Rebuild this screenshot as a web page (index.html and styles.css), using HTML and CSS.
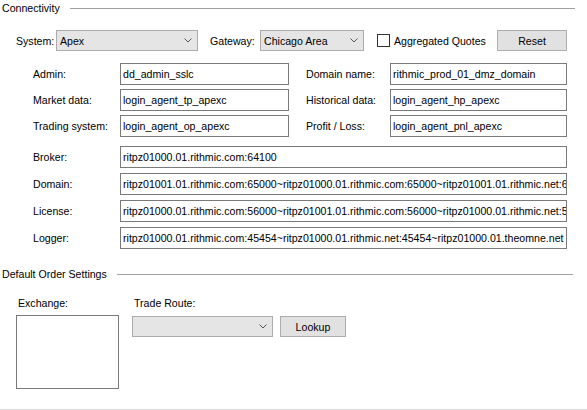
FILE: index.html
```html
<!DOCTYPE html>
<html lang="en">
<head>
  <meta charset="UTF-8" />
  <meta name="viewport" content="width=device-width, initial-scale=1.0"/>
  <title>Connection Settings</title>
  <link rel="stylesheet" href="styles.css">
</head>
<body>
  <div class="window">
    <!-- Connectivity group -->
    <div class="group-title">
      <span>Connectivity</span>
      <div class="rule"></div>
    </div>

    <div class="top-row">
      <span class="lbl lbl-system">System:</span>
      <div class="combo combo-system">
        <span>Apex</span>
        <svg width="8" height="5" viewBox="0 0 8 5"><path d="M0.5 0.5 L4 4 L7.5 0.5" fill="none" stroke="#555" stroke-width="1"/></svg>
      </div>
      <span class="lbl lbl-gateway">Gateway:</span>
      <div class="combo combo-gateway">
        <span>Chicago Area</span>
        <svg width="8" height="5" viewBox="0 0 8 5"><path d="M0.5 0.5 L4 4 L7.5 0.5" fill="none" stroke="#555" stroke-width="1"/></svg>
      </div>
      <label class="check">
        <span class="box"></span>
        <span>Aggregated Quotes</span>
      </label>
      <button class="btn btn-reset">Reset</button>
    </div>

    <div class="creds">
      <span class="lbl">Admin:</span>
      <div class="field">dd_admin_sslc</div>
      <span class="lbl">Domain name:</span>
      <div class="field">rithmic_prod_01_dmz_domain</div>

      <span class="lbl">Market data:</span>
      <div class="field">login_agent_tp_apexc</div>
      <span class="lbl">Historical data:</span>
      <div class="field">login_agent_hp_apexc</div>

      <span class="lbl">Trading system:</span>
      <div class="field">login_agent_op_apexc</div>
      <span class="lbl">Profit / Loss:</span>
      <div class="field">login_agent_pnl_apexc</div>
    </div>

    <div class="servers">
      <span class="lbl">Broker:</span>
      <div class="field">ritpz01000.01.rithmic.com:64100</div>
      <span class="lbl">Domain:</span>
      <div class="field">ritpz01001.01.rithmic.com:65000~ritpz01000.01.rithmic.com:65000~ritpz01001.01.rithmic.net:65000~ritpz01000.01.rithmic.net:65000</div>
      <span class="lbl">License:</span>
      <div class="field">ritpz01000.01.rithmic.com:56000~ritpz01001.01.rithmic.com:56000~ritpz01000.01.rithmic.net:56000~ritpz01001.01.rithmic.net:56000</div>
      <span class="lbl">Logger:</span>
      <div class="field">ritpz01000.01.rithmic.com:45454~ritpz01000.01.rithmic.net:45454~ritpz01000.01.theomne.net</div>
    </div>

    <!-- Default order settings group -->
    <div class="group-title group-orders">
      <span>Default Order Settings</span>
      <div class="rule"></div>
    </div>

    <div class="orders">
      <div class="exchange">
        <span class="lbl">Exchange:</span>
        <div class="listbox"></div>
      </div>
      <div class="route">
        <span class="lbl">Trade Route:</span>
        <div class="route-row">
          <div class="combo combo-route">
            <span></span>
            <svg width="8" height="5" viewBox="0 0 8 5"><path d="M0.5 0.5 L4 4 L7.5 0.5" fill="none" stroke="#555" stroke-width="1"/></svg>
          </div>
          <button class="btn btn-lookup">Lookup</button>
        </div>
      </div>
    </div>
  </div>
</body>
</html>
```

FILE: styles.css
```css
body {
  margin: 0;
  background: #fff;
  font-family: "Liberation Sans", Arial, sans-serif;
  font-size: 10.6px;
  color: #000;
}

.window {
  width: 587px;
  height: 410px;
  box-sizing: border-box;
  border-bottom: 1px solid #dadada;
  overflow: hidden;
}

.group-title {
  display: flex;
  align-items: center;
  height: 16px;
  padding: 0 12px 0 2px;
}

.group-title .rule {
  flex: 1;
  height: 1px;
  margin-left: 10px;
  background: #a0a0a0;
}

.group-orders {
  margin-top: 17px;
  padding-right: 14px;
}

.lbl {
  white-space: nowrap;
}

/* system / gateway row */
.top-row {
  display: flex;
  align-items: center;
  height: 21px;
  margin-top: 14px;
  padding-left: 16px;
}

.combo {
  display: flex;
  align-items: center;
  justify-content: space-between;
  height: 21px;
  box-sizing: border-box;
  padding: 0 5px 0 3px;
  background: #e5e5e5;
  border: 1px solid #acacac;
}

.combo svg {
  display: block;
}

.lbl-system {
  width: 40px;
}

.combo-system {
  width: 142px;
}

.lbl-gateway {
  width: 50px;
  margin-left: 12px;
}

.combo-gateway {
  width: 104px;
}

.check {
  display: flex;
  align-items: center;
  margin-left: 13px;
}

.check .box {
  width: 13px;
  height: 13px;
  box-sizing: border-box;
  border: 1px solid #333;
  background: #fff;
  margin-right: 4px;
}

.btn {
  height: 21px;
  box-sizing: border-box;
  background: #e1e1e1;
  border: 1px solid #adadad;
  font: inherit;
  padding: 0;
  color: #000;
}

.btn-reset {
  width: 70px;
  margin-left: auto;
  margin-right: 20px;
}

/* login fields */
.creds {
  display: grid;
  grid-template-columns: 87px 169px 101px 177px;
  grid-auto-rows: 22px;
  row-gap: 4px;
  align-items: center;
  margin-top: 12px;
  padding-left: 33px;
}

.creds .lbl:nth-child(4n+3) {
  margin-left: 17px;
}

.field {
  height: 22px;
  box-sizing: border-box;
  border: 1px solid #7a7a7a;
  background: #fff;
  padding: 0 2px;
  line-height: 20px;
  white-space: nowrap;
  overflow: hidden;
}

/* server addresses */
.servers {
  display: grid;
  grid-template-columns: 87px 447px;
  grid-auto-rows: 22px;
  row-gap: 5px;
  align-items: center;
  margin-top: 9px;
  padding-left: 33px;
}

/* order settings */
.orders {
  display: flex;
  margin-top: 15px;
  padding-left: 16px;
}

.orders .lbl {
  display: block;
  height: 13px;
  line-height: 13px;
  margin-left: 2px;
}

.listbox {
  width: 103px;
  height: 74px;
  box-sizing: border-box;
  border: 1px solid #7a7a7a;
  background: #fff;
  margin-top: 5px;
}

.route {
  margin-left: 13px;
}

.route-row {
  display: flex;
  margin-top: 6px;
}

.combo-route {
  width: 141px;
}

.btn-lookup {
  width: 66px;
  margin-left: 7px;
}
```
